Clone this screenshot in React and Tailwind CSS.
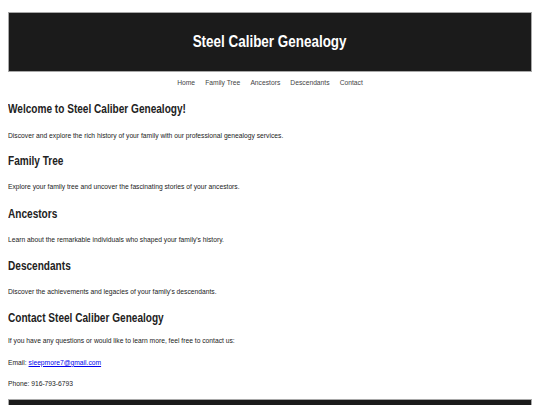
export default function App() {
  const font = "font-['Liberation_Sans','Arial',sans-serif]";
  const sx = "origin-left scale-x-[0.84]";
  return (
    <div className={`min-h-[405px] bg-white px-2 pt-3 text-[#222] ${font}`}>
      <header className="flex h-[60px] items-center justify-center border border-[#a8a8a8] bg-[#1b1b1b]">
        <h1 className="scale-x-[0.84] text-[16px] font-bold leading-none text-white">Steel Caliber Genealogy</h1>
      </header>
      <nav className="mt-[5px] flex scale-x-[0.84] justify-center gap-[12px] text-[8px] leading-[12px] text-[#444]">
        <a href="#">Home</a>
        <a href="#">Family Tree</a>
        <a href="#">Ancestors</a>
        <a href="#">Descendants</a>
        <a href="#">Contact</a>
      </nav>
      <main className="mt-[12px]">
        <h2 className={`text-[12px] font-bold leading-[16px] ${sx}`}>Welcome to Steel Caliber Genealogy!</h2>
        <p className={`mt-[13px] text-[8px] leading-[12px] ${sx}`}>Discover and explore the rich history of your family with our professional genealogy services.</p>
        <h2 className={`mt-[11px] text-[12px] font-bold leading-[16px] ${sx}`}>Family Tree</h2>
        <p className={`mt-[12px] text-[8px] leading-[12px] ${sx}`}>Explore your family tree and uncover the fascinating stories of your ancestors.</p>
        <h2 className={`mt-[13px] text-[12px] font-bold leading-[16px] ${sx}`}>Ancestors</h2>
        <p className={`mt-[12px] text-[8px] leading-[12px] ${sx}`}>Learn about the remarkable individuals who shaped your family's history.</p>
        <h2 className={`mt-[12px] text-[12px] font-bold leading-[16px] ${sx}`}>Descendants</h2>
        <p className={`mt-[12px] text-[8px] leading-[12px] ${sx}`}>Discover the achievements and legacies of your family's descendants.</p>
        <h2 className={`mt-[12px] text-[12px] font-bold leading-[16px] ${sx}`}>Contact Steel Caliber Genealogy</h2>
        <p className={`mt-[9px] text-[8px] leading-[12px] ${sx}`}>If you have any questions or would like to learn more, feel free to contact us:</p>
        <p className={`mt-[10px] text-[8px] leading-[12px] ${sx}`}>
          Email: <a href="mailto:sleepmore7@gmail.com" className="text-[#0000ee] underline">sleepmore7@gmail.com</a>
        </p>
        <p className={`mt-[9px] text-[8px] leading-[12px] ${sx}`}>Phone: 916-793-6793</p>
      </main>
      <footer className="mt-[9px] h-[40px] border border-[#a8a8a8] bg-[#1b1b1b]"></footer>
    </div>
  );
}
